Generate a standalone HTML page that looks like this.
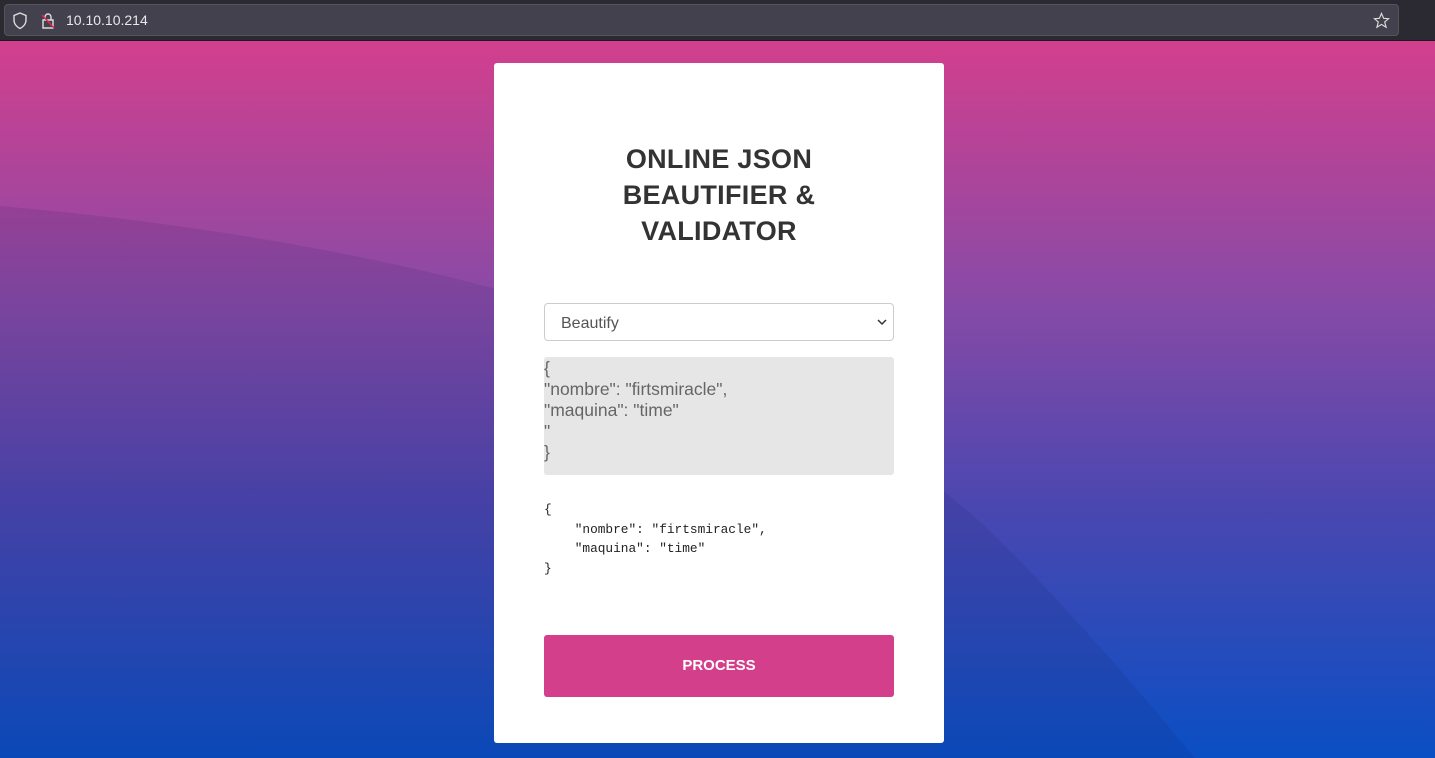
<!DOCTYPE html>
<html><head><style>
*{margin:0;padding:0;box-sizing:border-box}
body{width:1435px;height:758px;overflow:hidden;font-family:"Liberation Sans",sans-serif;position:relative}
.bar{position:absolute;left:0;top:0;width:1435px;height:41px;background:#2b2a33;border-bottom:1px solid #1c1b22}
.url{position:absolute;left:4px;top:4px;width:1395px;height:32px;background:#42414d;border-radius:4px;border:1px solid #555}
.url span{position:absolute;left:61px;top:7px;color:#e8e8ee;font-size:14px}
.bg{position:absolute;left:0;top:41px;width:1435px;height:717px;background:linear-gradient(180deg,#d33f8d 0%,#8a4aa6 35%,#4a47b0 65%,#0a4fc4 100%)}
.card{position:absolute;left:494px;top:63px;width:450px;height:680px;background:#fff;border-radius:3px}
h1{position:absolute;left:0;top:78px;width:450px;text-align:center;font-size:27px;line-height:36px;font-weight:900;color:#333;letter-spacing:0.3px}
.sel{position:absolute;left:50px;top:240px;width:350px;height:38px;border:1px solid #ccc;border-radius:4px;font-size:16px;color:#555;padding:11px 16px}
.ta{position:absolute;left:50px;top:294px;width:350px;height:118px;background:#e6e6e6;border-radius:3px;font-size:17.5px;line-height:21px;color:#666;padding:1px 0}
pre{position:absolute;left:50px;top:437px;font-family:"Liberation Mono",monospace;font-size:12.8px;line-height:19.5px;color:#222}
.btn{position:absolute;left:50px;top:572px;width:350px;height:62px;background:#d33f8b;border-radius:3px;color:#fff;font-weight:bold;font-size:15px;text-align:center;line-height:62px}
</style></head><body>
<div class="bar"><div class="url">
<svg style="position:absolute;left:7px;top:7px" width="16" height="18" viewBox="0 0 16 18"><path d="M8 1 L14 3.5 V8 C14 12 11 15 8 16.5 C5 15 2 12 2 8 V3.5 Z" fill="none" stroke="#ddd" stroke-width="1.4"/></svg>
<svg style="position:absolute;left:36px;top:7px" width="14" height="18" viewBox="0 0 14 18"><path d="M4 8 V5 a3 3 0 0 1 6 0 V8 M2 8 H12 V16 H2 Z" fill="none" stroke="#ddd" stroke-width="1.4"/><path d="M1 3 L13 16" stroke="#e22850" stroke-width="1.5"/></svg>
<span>10.10.10.214</span>
<svg style="position:absolute;right:8px;top:7px" width="17" height="17" viewBox="0 0 24 24"><path d="M12 2 L15 9 L22 9.5 L16.5 14 L18.5 21.5 L12 17.5 L5.5 21.5 L7.5 14 L2 9.5 L9 9 Z" fill="none" stroke="#ddd" stroke-width="1.6"/></svg>
</div></div>
<div class="bg">
<svg width="1435" height="717" style="position:absolute;left:0;top:0"><path d="M0 165 C400 200 800 300 1000 500 C1100 600 1180 700 1195 717 L0 717 Z" fill="rgba(20,20,80,0.10)"/></svg>
</div>
<div class="card">
<h1>ONLINE JSON<br>BEAUTIFIER &amp;<br>VALIDATOR</h1>
<div class="sel">Beautify<svg style="position:absolute;right:6px;top:15px" width="10" height="7" viewBox="0 0 10 7"><path d="M1 1 L5 5 L9 1" fill="none" stroke="#333" stroke-width="1.5"/></svg></div>
<div class="ta">{<br>"nombre": "firtsmiracle",<br>"maquina": "time"<br>"<br>}</div>
<pre>{
    "nombre": "firtsmiracle",
    "maquina": "time"
}</pre>
<div class="btn">PROCESS</div>
</div>
</body></html>
